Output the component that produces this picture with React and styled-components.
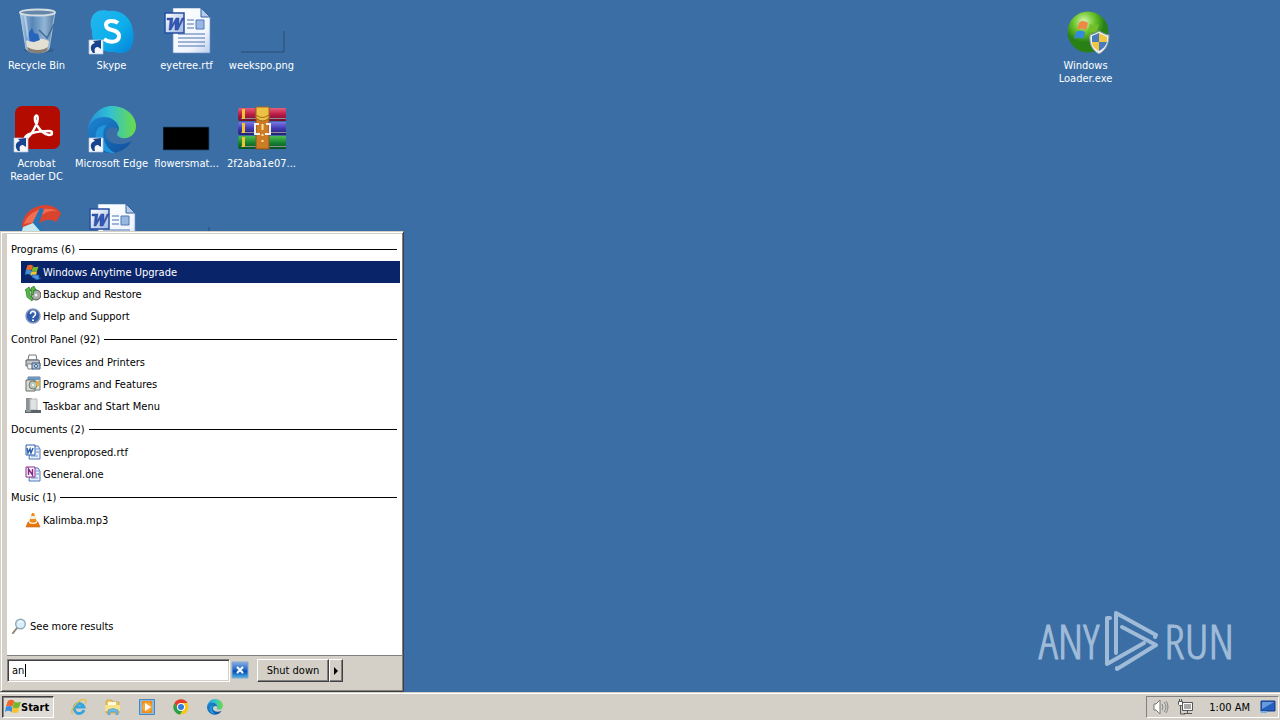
import React from "react";
import styled, { createGlobalStyle, css } from "styled-components";

const GlobalStyle = createGlobalStyle`
  *, *::before, *::after { box-sizing: border-box; }
  body {
    margin: 0;
    background: #3a6ea5;
    font-family: "DejaVu Sans Condensed", "Noto Sans", sans-serif;
    font-size: 11px;
    line-height: 13px;
    color: #000;
  }
  button, input { font: inherit; color: inherit; }
  h2, ul, p { margin: 0; padding: 0; font: inherit; }
  ul { list-style: none; }
`;

const raised = css`
  border: 1px solid;
  border-color: #fff #404040 #404040 #fff;
  box-shadow: inset -1px -1px 0 #808080;
`;

const Screen = styled.div`
  display: flex;
  flex-direction: column;
  min-height: 100vh;
`;

const Desktop = styled.main`
  position: relative;
  flex: 1;
  display: flex;
  justify-content: space-between;
  padding: 8px 158px 0 0;
  overflow: hidden;
`;

const IconGrid = styled.div`
  display: grid;
  grid-template-columns: repeat(4, 75px);
  grid-auto-rows: 98px;
  align-content: start;
`;

const Shortcut = styled.a`
  display: flex;
  flex-direction: column;
  align-items: center;
  gap: 3px;
  width: 73px;
  color: #fff;
  text-align: center;
  text-decoration: none;
  white-space: nowrap;
`;

const Label = styled.span`
  display: block;
  width: ${(p) => (p.$wrap ? "60px" : "auto")};
  white-space: ${(p) => (p.$wrap ? "normal" : "nowrap")};
`;

const StartMenu = styled.section`
  position: absolute;
  left: 0;
  bottom: 0;
  width: 404px;
  max-width: 100%;
  padding: 2px 0 0 5px;
  background: #d4d0c8;
  border: 1px solid;
  border-color: #d4d0c8 #404040 #404040 #d4d0c8;
  box-shadow: inset 1px 1px 0 #fff, inset -1px -1px 0 #808080;
`;

const Results = styled.div`
  display: flex;
  flex-direction: column;
  min-height: 422px;
  margin: 0 1px;
  padding: 3px 2px 18px 0;
  background: #fff;
  border-bottom: 1px solid #808080;
`;

const GroupTitle = styled.h2`
  display: flex;
  align-items: center;
  gap: 4px;
  height: 24px;
  padding: 0 3px 0 4px;
  &::after {
    content: "";
    flex: 1;
    height: 1px;
    background: #000;
  }
`;

const ResultRow = styled.button`
  display: flex;
  align-items: center;
  gap: 2px;
  width: calc(100% - 14px);
  height: 22px;
  margin: 0 0 0 14px;
  padding: 0 4px;
  border: 0;
  text-align: left;
  background: ${(p) => (p.$selected ? "#0a246a" : "transparent")};
  color: ${(p) => (p.$selected ? "#fff" : "#000")};
`;

const MoreResults = styled.a`
  display: flex;
  align-items: center;
  gap: 3px;
  height: 22px;
  margin-top: auto;
  padding-left: 4px;
  color: #000;
  text-decoration: none;
`;

const MenuFooter = styled.div`
  display: flex;
  align-items: flex-start;
  height: 35px;
  padding: 3px 1px 0;
`;

const SearchField = styled.div`
  position: relative;
  display: flex;
`;

const Caret = styled.span`
  position: absolute;
  left: 18px;
  top: 5px;
  width: 1px;
  height: 13px;
  background: #000;
`;

const SearchBox = styled.input`
  width: 223px;
  height: 23px;
  padding: 0 4px;
  border: 1px solid;
  border-color: #808080 #fff #fff #808080;
  box-shadow: inset 1px 1px 0 #404040, inset -1px -1px 0 #d4d0c8;
  background: #fff;
  outline: 0;
  caret-color: transparent;
`;

const ClearButton = styled.button`
  width: 18px;
  height: 18px;
  margin: 2px 8px 0 1px;
  padding: 0;
  border: 0;
  background: none;
`;

const PushButton = styled.button`
  ${raised}
  display: flex;
  align-items: center;
  justify-content: center;
  width: ${(p) => (p.$narrow ? "14px" : "72px")};
  height: 23px;
  padding: 0;
  background: #d4d0c8;
`;

const Taskbar = styled.footer`
  display: flex;
  align-items: center;
  height: 28px;
  padding: 3px 1px 2px 2px;
  background: #d4d0c8;
  border-top: 1px solid #d4d0c8;
  box-shadow: inset 0 1px 0 #fff;
`;

const StartButton = styled.button`
  display: flex;
  align-items: center;
  width: 52px;
  height: 22px;
  padding: 0 2px;
  border: 1px solid;
  border-color: #404040 #fff #fff #404040;
  box-shadow: inset 1px 1px 0 #808080;
  background: #dedbd5;
  font-weight: bold;
`;

const QuickLaunch = styled.nav`
  display: flex;
  gap: 18px;
  margin-left: 17px;
`;

const IconButton = styled.button`
  display: flex;
  width: 16px;
  height: 16px;
  padding: 0;
  border: 0;
  background: none;
`;

const Tray = styled.div`
  display: flex;
  align-items: center;
  gap: 8px;
  height: 22px;
  margin-left: auto;
  padding: 0 2px 0 6px;
  border: 1px solid;
  border-color: #808080 #fff #fff #808080;
`;

const Clock = styled.time`
  margin: 0 2px 0 8px;
`;

const Watermark = styled.div`
  position: absolute;
  right: 46px;
  bottom: 20px;
  display: flex;
  align-items: center;
  gap: 5px;
  color: #a0bbd8;
  font-family: "Open Sans Condensed Light", "Open Sans Condensed", "Liberation Sans Narrow", sans-serif;
  font-size: 48px;
  line-height: 62px;
  -webkit-text-stroke: 1px #a0bbd8;
`;

const Svg = ({ size = 16, box = size, children }) => (
  <svg width={size} height={size} viewBox={`0 0 ${box} ${box}`} aria-hidden="true" style={{ flex: "none" }}>
    {children}
  </svg>
);

const ShortcutArrow = () => (
  <g>
    <path d="M1 32h14v14H1z" fill="#f4f6fa" stroke="#b8c6dc" strokeWidth=".7" />
    <path d="M5 45c-4-5-2-9 2-10l-2-2 8-1v9l-3-2c-3 0-4 2-3 6z" fill="#17438f" />
  </g>
);

const BinIcon = () => (
  <Svg size={48}>
    <defs>
      <linearGradient id="bin" x2="1"><stop stopColor="#a9c9e5" /><stop offset=".35" stopColor="#5685b6" /><stop offset=".7" stopColor="#91b5d6" /><stop offset="1" stopColor="#54779c" /></linearGradient>
    </defs>
    <ellipse cx="26" cy="42" rx="15" ry="3" fill="#244b72" opacity=".4" />
    <path d="M7 4l6 37c3 5 20 5 23 0l6-37z" fill="url(#bin)" stroke="#bad2e7" strokeWidth=".8" />
    <path d="M13 33c6-4 16-3 23 0l-1 8c-4 4-17 4-21 0z" fill="#e3dfd3" />
    <path d="M14 39c7 4 15 4 21 0l-1 4c-5 3-14 3-19 0z" fill="#847e75" />
    <path d="M14 31l2-7 3-4 2 5 4 1 2 6-6 2-6-1z" fill="#2765bd" />
    <path d="M26 22l8 8 7-14" stroke="#416b96" strokeWidth="1.5" fill="none" />
    <ellipse cx="24.500" cy="4.500" rx="17.500" ry="3" fill="#6487a9" stroke="#d5dce3" strokeWidth="1.8" />
    <path d="M12 8l4 28" stroke="#d1e3f2" opacity=".6" strokeWidth="2" />
  </Svg>
);

const SkypeIcon = () => (
  <Svg size={48}>
    <defs><linearGradient id="sky" x2="1" y2="1"><stop stopColor="#25b6ef" /><stop offset=".55" stopColor="#0dafea" /><stop offset="1" stopColor="#0781d8" /></linearGradient></defs>
    <path d="M6 6c4-5 11-4 15-3 12-2 23 7 24 20 1 6 1 12-2 17-5 7-13 5-17 4C13 45 3 35 4 23 2 17 2 10 6 6z" fill="url(#sky)" />
    <path d="M30 15c-4-3-12-3-12 2 0 7 13 3 13 11 0 7-10 7-15 3" fill="none" stroke="#fff" strokeWidth="4" />
    <ShortcutArrow />
  </Svg>
);

const WordIcon = () => (
  <Svg size={48}>
    <defs>
      <linearGradient id="page" x2="1" y2="1"><stop stopColor="#fff" /><stop offset=".7" stopColor="#f0f5fd" /><stop offset="1" stopColor="#b9cdec" /></linearGradient>
      <linearGradient id="wd" x2="1" y2="1"><stop stopColor="#fff" /><stop offset="1" stopColor="#9cb6e4" /></linearGradient>
    </defs>
    <path d="M10 0h28l9 9v36H10z" fill="url(#page)" stroke="#7193c4" strokeWidth=".7" />
    <path d="M38 0v9h9z" fill="#b6caea" stroke="#34639e" />
    <path d="M24 12h7M24 16h7M24 20h7M15 26h27M15 30h27M15 34h27M15 38h27" stroke="#4b73ae" />
    <path d="M33 12h8v9h-8z" fill="#9ab7e2" stroke="#4e78b9" />
    <path d="M2 5h19v20H2z" fill="url(#wd)" stroke="#244da0" strokeWidth="1.5" />
    <path d="M4 10h6l-1 7 4-7h3v7l3-7h2l-6 12h-3v-7l-4 7H6l1-10H4z" fill="#3558b4" stroke="#1b398a" strokeWidth=".4" />
  </Svg>
);

const ThinPictureIcon = () => (
  <Svg size={48}>
    <path d="M3 44h43V23" fill="none" stroke="#274d74" strokeWidth="1" />
    <path d="M2 22h43v21H2z" fill="#3a6ea5" />
  </Svg>
);

const BlackPictureIcon = () => (
  <Svg size={48}><path d="M0 21h46v23H0z" fill="#000" stroke="#234e78" strokeWidth=".7" /></Svg>
);

const AcrobatIcon = () => (
  <Svg size={48}>
    <rect x="2" y="0" width="45" height="43" rx="7" fill="#b30b00" />
    <path d="M12 33c-2-4 10-8 24-8 4 0 4 4 0 4C26 27 21 15 22 11c2-4 4 0 2 6-3 7-7 15-12 16z" fill="none" stroke="#fff" strokeWidth="2.400" />
    <ShortcutArrow />
  </Svg>
);

const EdgeShape = ({ id }) => (
  <g>
    <defs>
      <linearGradient id={`${id}a`} x2="1"><stop stopColor="#2491d8" /><stop offset=".45" stopColor="#32c0d4" /><stop offset="1" stopColor="#6bdc45" /></linearGradient>
      <linearGradient id={`${id}b`} x2="1" y2="1"><stop stopColor="#1b86d2" /><stop offset="1" stopColor="#124e9b" /></linearGradient>
    </defs>
    <path d="M0 23C2 10 12 0 24 0c14 0 24 10 24 20 0 12-13 15-18 10-2-2 0-4 1-6 0-7-7-11-14-11C9 13 3 17 0 23z" fill={`url(#${id}a)`} />
    <path d="M0 24c1-9 9-13 16-13 9 0 15 6 15 13-4-5-13-3-13 4 0 10 15 13 26 7-6 9-14 12-22 12C10 47 0 36 0 24z" fill={`url(#${id}b)`} />
    <path d="M19 19c-7 6-4 22 8 28C12 48 4 33 9 24c2-4 6-5 10-5z" fill="#2196db" />
  </g>
);

const EdgeIcon = () => <Svg size={48}><EdgeShape id="edge" /><ShortcutArrow /></Svg>;

const RarIcon = () => (
  <Svg size={48}>
    <defs>
      <linearGradient id="ra" y2="1" x2="0"><stop stopColor="#e65d79" /><stop offset=".5" stopColor="#b91b46" /><stop offset="1" stopColor="#6e102d" /></linearGradient>
      <linearGradient id="rb" y2="1" x2="0"><stop stopColor="#7977e4" /><stop offset=".5" stopColor="#4139b2" /><stop offset="1" stopColor="#24206e" /></linearGradient>
      <linearGradient id="rc" y2="1" x2="0"><stop stopColor="#4fbd51" /><stop offset=".5" stopColor="#178634" /><stop offset="1" stopColor="#07501d" /></linearGradient>
    </defs>
    {["ra", "rb", "rc"].map((c, i) => (
      <g key={c} transform={`translate(0 ${i * 14})`}>
        <path d="M1 2h47v13H1q-3-6 0-13z" fill={`url(#${c})`} />
        <path d="M3 12h45v1H3z" fill="#8f8f96" />
        <path d="M4 3h3v10H4z" fill="#f0c52e" />
      </g>
    ))}
    <path d="M18 2h13v41H18z" fill="#cd7b24" stroke="#8b541a" />
    <path d="M18 1h13v11q-6 6-13 0z" fill="#edc143" stroke="#a3661d" />
    <path d="M18 9q6 5 13 0" stroke="#a3661d" fill="none" />
    <path d="M21 18h-4v10h5M28 18h4v10h-5" fill="none" stroke="#eee" strokeWidth="2" />
    <path d="M24.500 18v6M24.500 28v2M24.500 34v2" stroke="#ffe198" strokeWidth="2" />
  </Svg>
);

const CleanerIcon = () => (
  <Svg size={48}>
    <path d="M9 25C9 9 20 2 32 1c8 0 14 4 16 9l-5 8c-6-4-13-3-20 4l-4 4z" fill="#da442e" />
    <path d="M11 20C15 8 29 1 45 7 34 6 27 11 23 18z" fill="#ef6d50" />
    <path d="M27 4l4 1-5 14 4 9-17 5-6-9 12-4z" fill="#2474b5" />
    <path d="M10 23l10-4 7 8-20 7z" fill="#c5e8ee" />
  </Svg>
);

const LoaderIcon = () => (
  <Svg size={48}>
    <defs><radialGradient id="orb" cx=".4" cy=".25"><stop stopColor="#d8f7b6" /><stop offset=".5" stopColor="#6fc72e" /><stop offset="1" stopColor="#288017" /></radialGradient></defs>
    <circle cx="26" cy="24" r="20.500" fill="url(#orb)" />
    <path d="M17 15c3-3 6-2 9 0l-2 7c-3-2-6-2-9 0z" fill="#ef8748" />
    <path d="M28 16c4 2 6 1 9 0l-2 7c-3 2-6 1-9 0z" fill="#72bf2b" />
    <path d="M14 24c3-2 6-2 9 0l-2 7c-3-2-6-2-9 0z" fill="#3389dc" />
    <path d="M28 27c3-1 6-2 9-4 4 2 7 4 10 4 0 9-3 15-10 19-7-4-10-10-9-19z" fill="#eee" stroke="#8598ad" />
    <path d="M30 28l7-3v9h-7zM37 34h8c-1 4-4 7-8 9z" fill="#477bb9" />
    <path d="M37 25l8 4v5h-8zM30 34h7v9c-4-2-7-5-7-9z" fill="#f1c643" />
  </Svg>
);

const Flag = () => (
  <g>
    <path d="M3 2c3-2 5-1 7 0L8 8C6 7 4 7 1 8z" fill="#ee662c" />
    <path d="M10 3c2 1 4 1 7 0l-2 6c-2 1-4 1-7 0z" fill="#74b72d" />
    <path d="M1 8c3-1 5-1 7 1l-1 5c-3-2-5-2-7 0z" fill="#3b8edd" />
    <path d="M8 9c2 1 4 1 7 0l-1 5c-2 1-4 1-7 0z" fill="#f4c32e" />
  </g>
);

const UpgradeIcon = () => (
  <Svg><g transform="scale(.8)"><Flag /></g><path d="M7 11h7v3h2l-4 2-5-3z" fill="#4b93df" stroke="#1756a5" strokeWidth=".7" /></Svg>
);
const BackupIcon = () => (
  <Svg>
    <circle cx="11" cy="9" r="5" fill="#aaa" stroke="#555" /><circle cx="11" cy="9" r="1.500" fill="#eee" />
    <path d="M0 4l4-3 2 4H4l1 5 3 2-1 3-5-4-1-6zM6 2l3-2 2 4H9l-1 5-2-1z" fill="#56ba45" stroke="#23722d" strokeWidth=".7" />
  </Svg>
);
const HelpIcon = () => (
  <Svg>
    <circle cx="8" cy="8" r="7" fill="#315dac" stroke="#8298c4" strokeWidth="1.500" />
    <path d="M5.500 6c0-4 5-3 5 0 0 2-2.500 2-2.500 4" stroke="#fff" strokeWidth="1.600" fill="none" /><path d="M7 11.500h2v1.500H7z" fill="#fff" />
  </Svg>
);
const PrinterIcon = () => (
  <Svg>
    <path d="M4 1h7l1 5H3z" fill="#fff" stroke="#777" /><path d="M1 6h13l1 6H1z" fill="#c3c7cc" stroke="#596069" />
    <path d="M2 10h6v5H3z" fill="#f4f4f4" stroke="#888" /><path d="M7 9h8v6H7z" fill="#a9c1dc" stroke="#405d7c" /><circle cx="11" cy="12" r="1.500" fill="#fff" stroke="#405d7c" />
  </Svg>
);
const ProgramsIcon = () => (
  <Svg>
    <path d="M3 1h12v13H3z" fill="#e7e3c7" stroke="#697d91" /><path d="M3 1h12v3H3z" fill="#6d99c8" />
    <path d="M1 4h9v11H1z" fill="#d7dcd2" stroke="#666e69" /><circle cx="8" cy="9" r="4" fill="#b8c9be" stroke="#777" /><circle cx="8" cy="9" r="1" fill="#fff" /><path d="M11 5h3v5h-3z" fill="#e6ad37" />
  </Svg>
);
const TaskbarIcon = () => (
  <Svg><path d="M1 0h6v13H1z" fill="#8b9298" /><path d="M5 1h7v11H5z" fill="#dfe2e3" stroke="#b4b8ba" /><path d="M0 12h16v3H0z" fill="#5d6268" /><path d="M1 12h5v2H1z" fill="#8d9e9e" /></Svg>
);
const OfficeFileIcon = ({ color, letter }) => (
  <Svg>
    <path d="M5 2h8l2 3v10H4z" fill="#e8f0ff" stroke="#4f78b9" /><path d="M11 5h3M11 8h3M6 12h7" stroke="#7194cb" />
    <path d="M1 1h9v10H1z" fill="#fff" stroke={color} />
    <path d={letter} fill="none" stroke={color} strokeWidth="1.500" />
  </Svg>
);
const ConeIcon = () => (
  <Svg><path d="M7 1h2l3 9H4z" fill="#f18c17" /><path d="M6 4h4l1 3H5z" fill="#f0f0e8" /><path d="M3 10h10l2 5H1z" fill="#e97508" stroke="#bf6a1c" strokeWidth=".6" /><path d="M4 9q4 3 8 0v2q-4 2-8 0z" fill="#fff0d8" /></Svg>
);
const SearchIcon = () => (
  <Svg><path d="M6 10l-4 5" stroke="#8e8373" strokeWidth="2" strokeLinecap="round" /><circle cx="9.500" cy="6" r="4.800" fill="#d9f0fc" stroke="#92a9b9" strokeWidth="1.400" /><path d="M7 5q2-3 4-1" stroke="#fff" fill="none" /></Svg>
);
const ClearIcon = () => (
  <Svg size={18}>
    <defs><linearGradient id="cl" x2="0" y2="1"><stop stopColor="#8aafe2" /><stop offset=".45" stopColor="#286ac8" /><stop offset=".6" stopColor="#0751b3" /><stop offset="1" stopColor="#54b5e8" /></linearGradient></defs>
    <path d="M1 1h16v16H1z" fill="url(#cl)" stroke="#7ea7d0" /><path d="M6 6l6 6M12 6l-6 6" stroke="#fff" strokeWidth="2" />
  </Svg>
);
const IEIcon = () => (
  <Svg><path d="M13 11A5 5 0 1 1 13 8H4" fill="none" stroke="#36a5df" strokeWidth="2.800" /><path d="M2 15C-1 13 2 8 6 4s9-5 9-2c0 1 0 2-1 3" fill="none" stroke="#e6bd3d" strokeWidth="1.300" /></Svg>
);
const FolderIcon = () => (
  <Svg><path d="M1 3l1-2h5l1 2h6v11H1z" fill="#e9c85f" stroke="#c99f35" strokeWidth=".7" /><path d="M3 3h8v4H3z" fill="#fffbe4" /><path d="M0 6h15v6H0z" fill="#f7e28d" /><path d="M3 16v-5q5-3 10 0v5h-2v-3H5v3z" fill="#70bce4" stroke="#3c8ebc" strokeWidth=".5" /></Svg>
);
const PlayerIcon = () => (
  <Svg><path d="M.5.5h15v15H.5z" fill="#8bbae0" stroke="#4b86b8" /><path d="M3 2h10v12H3z" fill="#f28a17" /><circle cx="8" cy="8" r="5" fill="#f8a436" /><path d="M6 4l6 4-6 4z" fill="#fff" /></Svg>
);
const ChromeIcon = () => (
  <Svg><circle cx="8" cy="8" r="7.500" fill="#f9c718" /><path d="M1.500 4A7.500 7.500 0 0 1 14.500 4H8L5 10z" fill="#e33c2f" /><path d="M1.500 4A7.500 7.500 0 0 0 7 15.500L10.500 10H5z" fill="#29a04b" /><circle cx="8" cy="8" r="4" fill="#fff" /><circle cx="8" cy="8" r="3" fill="#347be5" /></Svg>
);
const SpeakerIcon = () => (
  <Svg><path d="M1 5h2l4-4v14l-4-4H1z" fill="#fff" stroke="#777" /><path d="M9 5q2 3 0 6M11 3q4 5 0 10M13 2q4 6 0 12" fill="none" stroke="#858585" /></Svg>
);
const NetworkIcon = () => (
  <Svg><path d="M5.500 3.500h10v8h-10z" fill="#a9a9a9" stroke="#555" /><path d="M6.500 4.500h8v6h-8z" fill="none" stroke="#fff" /><path d="M7 14.500h8M10.500 12v2M3.500 6v9H8" stroke="#555" fill="none" /><path d="M1.500 2.500h4v3l-1 1h-2l-1-1zM2.500 0v3M4.500 0v3" fill="#fff" stroke="#555" /></Svg>
);
const DisplayIcon = () => (
  <Svg><path d="M1 2h14v10H1z" fill="#225fbe" stroke="#153b82" /><path d="M2 3h12L2 10z" fill="#669cdf" /><path d="M0 12h7v2H1z" fill="#7caee0" /></Svg>
);

const RunLogo = () => (
  <svg width="55" height="62" viewBox="0 0 55 62" aria-hidden="true">
    <g fill="none" stroke="#a0bbd8" strokeWidth="4" strokeLinejoin="round" strokeLinecap="round">
      <path d="M12 43V3L52 25l-1 2" />
      <path d="M18 17L52 35L13 59v-1" />
      <path d="M40 33L3 54V8h3" />
    </g>
  </svg>
);

const W = "M2 4l1 5 2-4 1 4 2-5";
const N = "M3.500 9V3l4 6V3";

const shortcuts = [
  ["Recycle Bin", BinIcon],
  ["Skype", SkypeIcon],
  ["eyetree.rtf", WordIcon],
  ["weekspo.png", ThinPictureIcon],
  ["Acrobat Reader DC", AcrobatIcon, true],
  ["Microsoft Edge", EdgeIcon],
  ["flowersmat...", BlackPictureIcon],
  ["2f2aba1e07...", RarIcon],
  ["", CleanerIcon],
  ["", WordIcon],
  ["", ThinPictureIcon],
];

const groups = [
  ["Programs (6)", [["Windows Anytime Upgrade", <UpgradeIcon />], ["Backup and Restore", <BackupIcon />], ["Help and Support", <HelpIcon />]]],
  ["Control Panel (92)", [["Devices and Printers", <PrinterIcon />], ["Programs and Features", <ProgramsIcon />], ["Taskbar and Start Menu", <TaskbarIcon />]]],
  ["Documents (2)", [["evenproposed.rtf", <OfficeFileIcon color="#315fac" letter={W} />], ["General.one", <OfficeFileIcon color="#872a87" letter={N} />]]],
  ["Music (1)", [["Kalimba.mp3", <ConeIcon />]]],
];

const quickLaunch = [
  ["Internet Explorer", <IEIcon />],
  ["Windows Explorer", <FolderIcon />],
  ["Media Player", <PlayerIcon />],
  ["Chrome", <ChromeIcon />],
  ["Edge", <Svg size={16} box={48}><EdgeShape id="edgeSmall" /></Svg>],
];

export default function App() {
  return (
    <Screen>
      <GlobalStyle />
      <Desktop>
        <IconGrid>
          {shortcuts.map(([name, Icon, wrap], i) => (
            <Shortcut href="#" key={i}>
              <Icon />
              {name && <Label $wrap={wrap}>{name}</Label>}
            </Shortcut>
          ))}
        </IconGrid>
        <Shortcut href="#">
          <LoaderIcon />
          <Label $wrap>Windows Loader.exe</Label>
        </Shortcut>
        <Watermark><span>ANY</span><RunLogo /><span>RUN</span></Watermark>
        <StartMenu>
          <Results>
            {groups.map(([title, items], g) => (
              <section key={title}>
                <GroupTitle>{title}</GroupTitle>
                <ul>
                  {items.map(([name, icon], i) => (
                    <li key={name}>
                      <ResultRow $selected={g === 0 && i === 0}>{icon}<span>{name}</span></ResultRow>
                    </li>
                  ))}
                </ul>
              </section>
            ))}
            <MoreResults href="#"><SearchIcon />See more results</MoreResults>
          </Results>
          <MenuFooter>
            <SearchField>
              <SearchBox type="text" aria-label="Search" defaultValue="an" autoFocus />
              <Caret />
            </SearchField>
            <ClearButton aria-label="Clear search"><ClearIcon /></ClearButton>
            <PushButton>Shut down</PushButton>
            <PushButton $narrow aria-label="Shut down options"><Svg size={8}><path d="M2 0l4 4-4 4z" /></Svg></PushButton>
          </MenuFooter>
        </StartMenu>
      </Desktop>
      <Taskbar>
        <StartButton><Svg size={16} box={17}><Flag /></Svg>Start</StartButton>
        <QuickLaunch>
          {quickLaunch.map(([name, icon]) => <IconButton key={name} aria-label={name}>{icon}</IconButton>)}
        </QuickLaunch>
        <Tray>
          <IconButton aria-label="Volume"><SpeakerIcon /></IconButton>
          <IconButton aria-label="Network"><NetworkIcon /></IconButton>
          <Clock>1:00 AM</Clock>
          <IconButton aria-label="Show desktop"><DisplayIcon /></IconButton>
        </Tray>
      </Taskbar>
    </Screen>
  );
}
